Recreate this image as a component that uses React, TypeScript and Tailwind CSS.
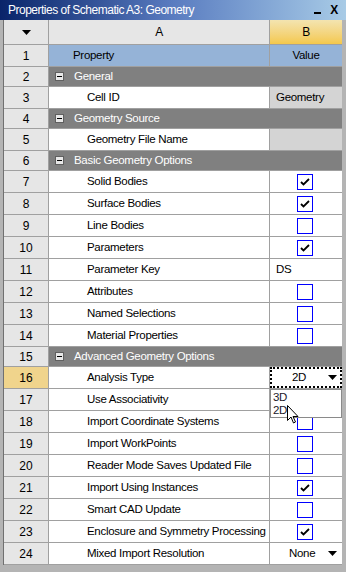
import type { ReactNode } from 'react'

type Row =
  | { n: number; kind: 'group'; label: string }
  | { n: number; kind: 'item'; label: string; value?: 'check' | 'box' | 'gray' | 'drop' | 'none'; text?: string }

const rows: Row[] = [
  { n: 2, kind: 'group', label: 'General' },
  { n: 3, kind: 'item', label: 'Cell ID', value: 'gray', text: 'Geometry' },
  { n: 4, kind: 'group', label: 'Geometry Source' },
  { n: 5, kind: 'item', label: 'Geometry File Name', value: 'gray' },
  { n: 6, kind: 'group', label: 'Basic Geometry Options' },
  { n: 7, kind: 'item', label: 'Solid Bodies', value: 'check' },
  { n: 8, kind: 'item', label: 'Surface Bodies', value: 'check' },
  { n: 9, kind: 'item', label: 'Line Bodies', value: 'box' },
  { n: 10, kind: 'item', label: 'Parameters', value: 'check' },
  { n: 11, kind: 'item', label: 'Parameter Key', text: 'DS' },
  { n: 12, kind: 'item', label: 'Attributes', value: 'box' },
  { n: 13, kind: 'item', label: 'Named Selections', value: 'box' },
  { n: 14, kind: 'item', label: 'Material Properties', value: 'box' },
  { n: 15, kind: 'group', label: 'Advanced Geometry Options' },
  { n: 16, kind: 'item', label: 'Analysis Type', value: 'drop', text: '2D' },
  { n: 17, kind: 'item', label: 'Use Associativity', value: 'none' },
  { n: 18, kind: 'item', label: 'Import Coordinate Systems', value: 'box' },
  { n: 19, kind: 'item', label: 'Import WorkPoints', value: 'box' },
  { n: 20, kind: 'item', label: 'Reader Mode Saves Updated File', value: 'box' },
  { n: 21, kind: 'item', label: 'Import Using Instances', value: 'check' },
  { n: 22, kind: 'item', label: 'Smart CAD Update', value: 'box' },
  { n: 23, kind: 'item', label: 'Enclosure and Symmetry Processing', value: 'check' },
  { n: 24, kind: 'item', label: 'Mixed Import Resolution', value: 'none', text: 'None' },
]

const Arrow = () => (
  <svg width="9" height="5" viewBox="0 0 9 5" className="block">
    <path d="M0 0h9L4.5 5z" fill="#000" />
  </svg>
)

const CheckBox = ({ checked }: { checked: boolean }) => (
  <div className="h-[16px] w-[16px] border border-[#0000ff] bg-white">
    {checked && (
      <svg width="14" height="14" viewBox="0 0 14 14" className="block">
        <path d="M3 7l2.5 2.5L11 4" stroke="#000" strokeWidth="1.8" fill="none" />
      </svg>
    )}
  </div>
)

const NumCell = ({ children, active }: { children: ReactNode; active?: boolean }) => (
  <div
    className={`flex w-[45px] shrink-0 items-center justify-center border-r border-[#a0a0a0] text-[12px] tracking-normal ${
      active ? 'bg-[#f0d48c]' : 'bg-[#e6e6e6]'
    }`}
  >
    {children}
  </div>
)

const ValueCell = ({ row }: { row: Extract<Row, { kind: 'item' }> }) => {
  if (row.value === 'gray')
    return <div className="flex flex-1 items-center bg-[#d4d4d4] pl-[6px]">{row.text}</div>
  if (row.value === 'check' || row.value === 'box')
    return (
      <div className="flex flex-1 items-center justify-center pr-[2px]">
        <CheckBox checked={row.value === 'check'} />
      </div>
    )
  if (row.value === 'drop')
    return (
      <div className="flex flex-1 items-center border-2 border-dotted border-black pl-[20px] pr-[3px]">
        <span className="flex-1">{row.text}</span>
        <Arrow />
      </div>
    )
  if (row.text === 'None')
    return (
      <div className="flex flex-1 items-center pl-[19px] pr-[5px]">
        <span className="flex-1">None</span>
        <Arrow />
      </div>
    )
  return <div className="flex flex-1 items-center pl-[6px]">{row.text}</div>
}

export default function App() {
  return (
    <div
      className="relative h-[572px] w-[346px] overflow-hidden whitespace-nowrap bg-[#b4b4b4] text-[11.5px] tracking-[-0.3px] text-black"
      style={{ fontFamily: '"Liberation Sans", Arial, sans-serif' }}
    >
      {/* title bar */}
      <div className="flex h-[20px] items-center bg-gradient-to-r from-[#0a246a] via-[#5a7cc0] to-[#a8cbe6] pl-[8px] pr-[8px]">
        <span className="flex-1 text-[12px] tracking-[-0.5px] text-white">Properties of Schematic A3: Geometry</span>
        <span className="mr-[9px] mt-[6px] block h-[2px] w-[7px] bg-black" />
        <span className="text-[12px] font-bold leading-none">X</span>
      </div>

      <div className="ml-[3px] mr-[4px] border-l border-[#707070] bg-white">
        {/* column header */}
        <div className="flex h-[25px] border-b border-[#a0a0a0] text-[12px]">
          <NumCell>
            <Arrow />
          </NumCell>
          <div className="flex w-[221px] shrink-0 items-center justify-center border-r border-[#a0a0a0] bg-[#e6e6e6]">
            A
          </div>
          <div className="flex flex-1 items-center justify-center bg-gradient-to-b from-[#f3e4b0] to-[#f4c84a]">B</div>
        </div>

        {/* row 1 */}
        <div className="flex h-[22px] border-b border-[#a0a0a0]">
          <NumCell>1</NumCell>
          <div className="flex w-[221px] shrink-0 items-center border-r border-[#a0a0a0] bg-[#95b3d7] pl-[24px]">
            Property
          </div>
          <div className="flex flex-1 items-center justify-center bg-[#95b3d7]">Value</div>
        </div>

        {rows.map((row) =>
          row.kind === 'group' ? (
            <div key={row.n} className="flex h-[20px] border-b border-[#a0a0a0]">
              <NumCell>{row.n}</NumCell>
              <div className="flex flex-1 items-center bg-[#808080] pl-[6px] text-white">
                <span className="mr-[10px] flex h-[9px] w-[9px] items-center justify-center border border-[#606060] bg-[#e8e8e8]">
                  <span className="block h-[1px] w-[5px] bg-black" />
                </span>
                {row.label}
              </div>
            </div>
          ) : (
            <div key={row.n} className="flex h-[22px] border-b border-[#a0a0a0]">
              <NumCell active={row.n === 16}>{row.n}</NumCell>
              <div className="flex w-[221px] shrink-0 items-center border-r border-[#a0a0a0] pl-[38px]">
                {row.label}
              </div>
              <ValueCell row={row} />
            </div>
          ),
        )}
      </div>

      {/* open dropdown list */}
      <div className="absolute left-[270px] top-[389px] h-[29px] w-[72px] border border-[#8a8a8a] bg-white pl-[2px] pt-[1px] leading-[13px] text-[#1a1a2a]">
        <div>3D</div>
        <div>2D</div>
      </div>

      {/* mouse cursor */}
      <svg className="absolute left-[287px] top-[405px]" width="12" height="20" viewBox="0 0 12 20">
        <path d="M0.5 0.5v15l3.5-3.5 2.5 6 2-1-2.5-5.5h5z" fill="#fff" stroke="#000" strokeWidth="1" />
      </svg>
    </div>
  )
}
